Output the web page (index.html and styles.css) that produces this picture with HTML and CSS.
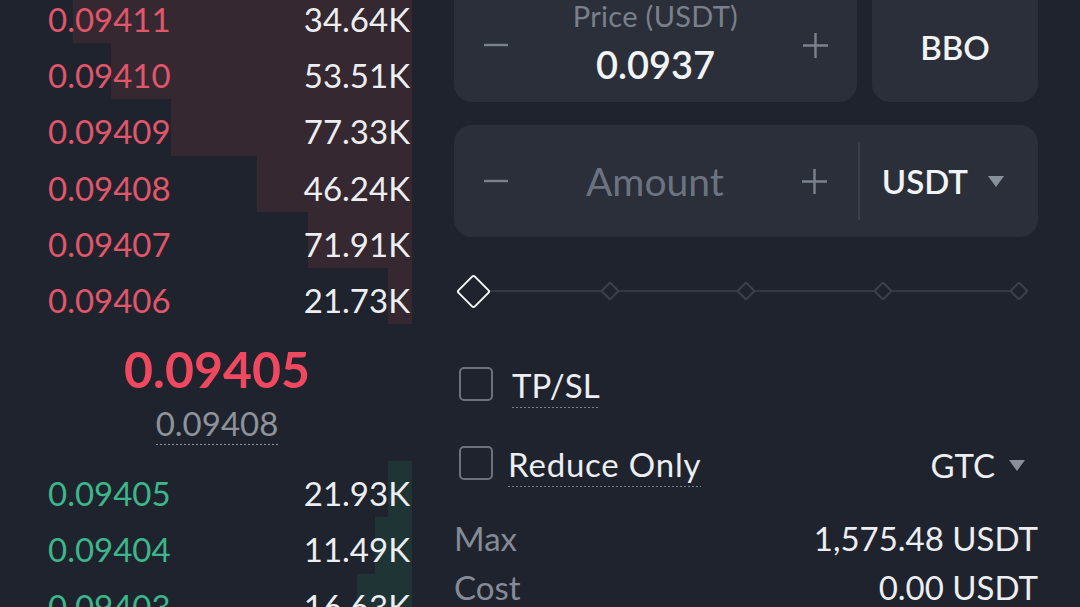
FILE: index.html
```html
<!DOCTYPE html>
<html>
<head>
<meta charset="utf-8">
<link rel="stylesheet" href="styles.css">
</head>
<body>
<div class="page">
  <div class="book">
    <div class="asks">
      <div class="row ask"><div class="depth" style="width:339px"></div><span class="price">0.09411</span><span class="qty">34.64K</span></div>
      <div class="row ask"><div class="depth" style="width:301px"></div><span class="price">0.09410</span><span class="qty">53.51K</span></div>
      <div class="row ask"><div class="depth" style="width:241px"></div><span class="price">0.09409</span><span class="qty">77.33K</span></div>
      <div class="row ask"><div class="depth" style="width:155px"></div><span class="price">0.09408</span><span class="qty">46.24K</span></div>
      <div class="row ask"><div class="depth" style="width:104px"></div><span class="price">0.09407</span><span class="qty">71.91K</span></div>
      <div class="row ask"><div class="depth" style="width:24px"></div><span class="price">0.09406</span><span class="qty">21.73K</span></div>
    </div>
    <div class="mid">
      <div class="last">0.09405</div>
      <div class="mark">0.09408</div>
    </div>
    <div class="bids">
      <div class="row bid"><div class="depth" style="width:24px"></div><span class="price">0.09405</span><span class="qty">21.93K</span></div>
      <div class="row bid"><div class="depth" style="width:37px"></div><span class="price">0.09404</span><span class="qty">11.49K</span></div>
      <div class="row bid"><div class="depth" style="width:55px"></div><span class="price">0.09403</span><span class="qty">16.63K</span></div>
    </div>
  </div>

  <div class="panel">
    <div class="price-row">
      <div class="card price-card">
        <svg class="step" width="26" height="26" viewBox="0 0 26 26"><path d="M1 13H25" stroke="#7b828d" stroke-width="2.4"/></svg>
        <div class="field">
          <div class="field-label">Price (USDT)</div>
          <div class="field-value">0.0937</div>
        </div>
        <svg class="step" width="27" height="27" viewBox="0 0 27 27"><path d="M1 13.5H26M13.5 1V26" stroke="#7b828d" stroke-width="2.4"/></svg>
      </div>
      <div class="card bbo-card">BBO</div>
    </div>

    <div class="card amount-card">
      <svg class="step" width="26" height="26" viewBox="0 0 26 26"><path d="M1 13H25" stroke="#7b828d" stroke-width="2.4"/></svg>
      <div class="amount-input">Amount</div>
      <svg class="step" width="27" height="27" viewBox="0 0 27 27"><path d="M1 13.5H26M13.5 1V26" stroke="#7b828d" stroke-width="2.4"/></svg>
      <div class="divider"></div>
      <div class="unit">USDT<span class="caret"></span></div>
    </div>

    <div class="slider">
      <div class="knob"><span class="diamond big"></span></div>
      <div class="knob"><span class="diamond"></span></div>
      <div class="knob"><span class="diamond"></span></div>
      <div class="knob"><span class="diamond"></span></div>
      <div class="knob"><span class="diamond"></span></div>
    </div>

    <div class="option tpsl">
      <span class="check"></span>
      <span class="opt-label">TP/SL</span>
    </div>
    <div class="option reduce">
      <span class="check"></span>
      <span class="opt-label">Reduce Only</span>
      <span class="tif">GTC<span class="caret"></span></span>
    </div>

    <div class="info">
      <div class="info-row"><span class="info-key">Max</span><span class="info-val">1,575.48 USDT</span></div>
      <div class="info-row"><span class="info-key">Cost</span><span class="info-val">0.00 USDT</span></div>
    </div>
  </div>
</div>
</body>
</html>
```

FILE: styles.css
```css
* { box-sizing: border-box; }
html, body {
  margin: 0;
  padding: 0;
  background: #1f232d;
  width: 1080px;
  height: 607px;
  overflow: hidden;
  font-family: Lato, "Open Sans", sans-serif;
  color: #eceef1;
}
.page {
  display: flex;
  height: 607px;
  overflow: hidden;
}
.book {
  width: 412px;
  flex: none;
}
.asks {
  margin-top: -13px;
}
.row {
  position: relative;
  height: 56.2px;
  padding: 9px 2px 0 48px;
  display: flex;
  justify-content: space-between;
  font-size: 33px;
  line-height: 46px;
}
.row .depth {
  position: absolute;
  top: 0;
  right: 0;
  bottom: 0;
}
.ask .depth { background: #352830; }
.bid .depth { background: #1f3535; }
.row span { position: relative; }
.ask .price { color: #e0566a; }
.bid .price { color: #3cb68a; }
.qty { color: #eceef1; }

.mid {
  height: 137px;
  display: flex;
  flex-direction: column;
  align-items: center;
  padding-left: 22px;
}
.last {
  margin-top: 17px;
  font-size: 50px;
  font-weight: 700;
  line-height: 56px;
  color: #f0485e;
}
.mark {
  margin-top: 6px;
  font-size: 33px;
  line-height: 40px;
  padding-bottom: 2px;
  color: #8d929b;
  background: linear-gradient(to right, #8d929b 50%, transparent 0) left bottom / 4px 1px repeat-x;
}

.panel {
  flex: 1;
  padding: 0 42px 0 42px;
}
.card {
  background: #2a2f39;
  border-radius: 18px;
}
.price-row {
  display: flex;
  gap: 15px;
  margin-top: -18px;
}
.price-card {
  width: 403px;
  height: 120px;
  display: flex;
  align-items: center;
  padding: 6px 28px 0 29px;
}
.step { flex: none; display: block; }
.field {
  flex: 1;
  text-align: center;
  align-self: flex-start;
  padding-top: 11px;
}
.field-label {
  font-size: 29px;
  letter-spacing: 0.3px;
  line-height: 34px;
  color: #7a808b;
}
.field-value {
  margin-top: 9px;
  font-size: 38px;
  font-weight: 600;
  line-height: 44px;
  color: #f2f3f5;
}
.bbo-card {
  flex: 1;
  height: 120px;
  display: flex;
  align-items: center;
  justify-content: center;
  padding-top: 10px;
  font-size: 33px;
  font-weight: 600;
  color: #f2f3f5;
}
.amount-card {
  margin-top: 23px;
  height: 112px;
  display: flex;
  align-items: center;
  padding: 0 34px 0 29px;
}
.amount-input {
  flex: 1;
  text-align: center;
  font-size: 39px;
  line-height: 44px;
  color: #6c7380;
}
.divider {
  width: 2px;
  height: 78px;
  margin-left: 30px;
  background: #3a404b;
  align-self: flex-start;
  margin-top: 17px;
}
.unit {
  display: flex;
  align-items: center;
  padding-left: 22px;
  font-size: 33px;
  font-weight: 600;
  color: #f2f3f5;
}
.caret {
  display: inline-block;
  width: 0;
  height: 0;
  border-left: 8.5px solid transparent;
  border-right: 8.5px solid transparent;
  border-top: 11px solid #8a909b;
  margin-left: 20px;
}

.slider {
  position: relative;
  margin: 36px 0 0 1px;
  width: 582px;
  height: 36px;
  display: flex;
  justify-content: space-between;
}
.slider::before {
  content: "";
  position: absolute;
  left: 18px;
  right: 18px;
  top: 17px;
  height: 2px;
  background: #323844;
}
.knob {
  position: relative;
  width: 36px;
  height: 36px;
  display: flex;
  align-items: center;
  justify-content: center;
}
.diamond {
  width: 14px;
  height: 14px;
  border: 2px solid #3b414c;
  border-radius: 2px;
  background: #1f232d;
  transform: rotate(45deg);
}
.diamond.big {
  width: 25px;
  height: 25px;
  border: 2.6px solid #f4f5f7;
  border-radius: 3px;
}

.option {
  display: flex;
  align-items: center;
  height: 34px;
  padding-left: 5px;
}
.tpsl { margin-top: 58px; }
.reduce { margin-top: 45px; }
.check {
  width: 34px;
  height: 34px;
  border: 2.5px solid #6b717d;
  border-radius: 5px;
  flex: none;
}
.opt-label {
  font-size: 33px;
  line-height: 38px;
  padding-bottom: 4px;
  margin-top: 6px;
  color: #eceef1;
  background: linear-gradient(to right, #7a808b 50%, transparent 0) left bottom / 4px 1px repeat-x;
}
.tpsl .opt-label { margin-left: 19px; }
.reduce .opt-label { margin-left: 15px; letter-spacing: 0.8px; }
.tif {
  margin-left: auto;
  margin-right: 13px;
  margin-top: 4px;
  display: flex;
  align-items: center;
  font-size: 33px;
  color: #eceef1;
}
.tif .caret { margin-left: 14px; }

.info {
  margin-top: 34px;
}
.info-row {
  display: flex;
  justify-content: space-between;
  font-size: 33px;
  line-height: 49px;
}
.info-key { color: #858b96; }
.info-val { color: #eceef1; }
```
